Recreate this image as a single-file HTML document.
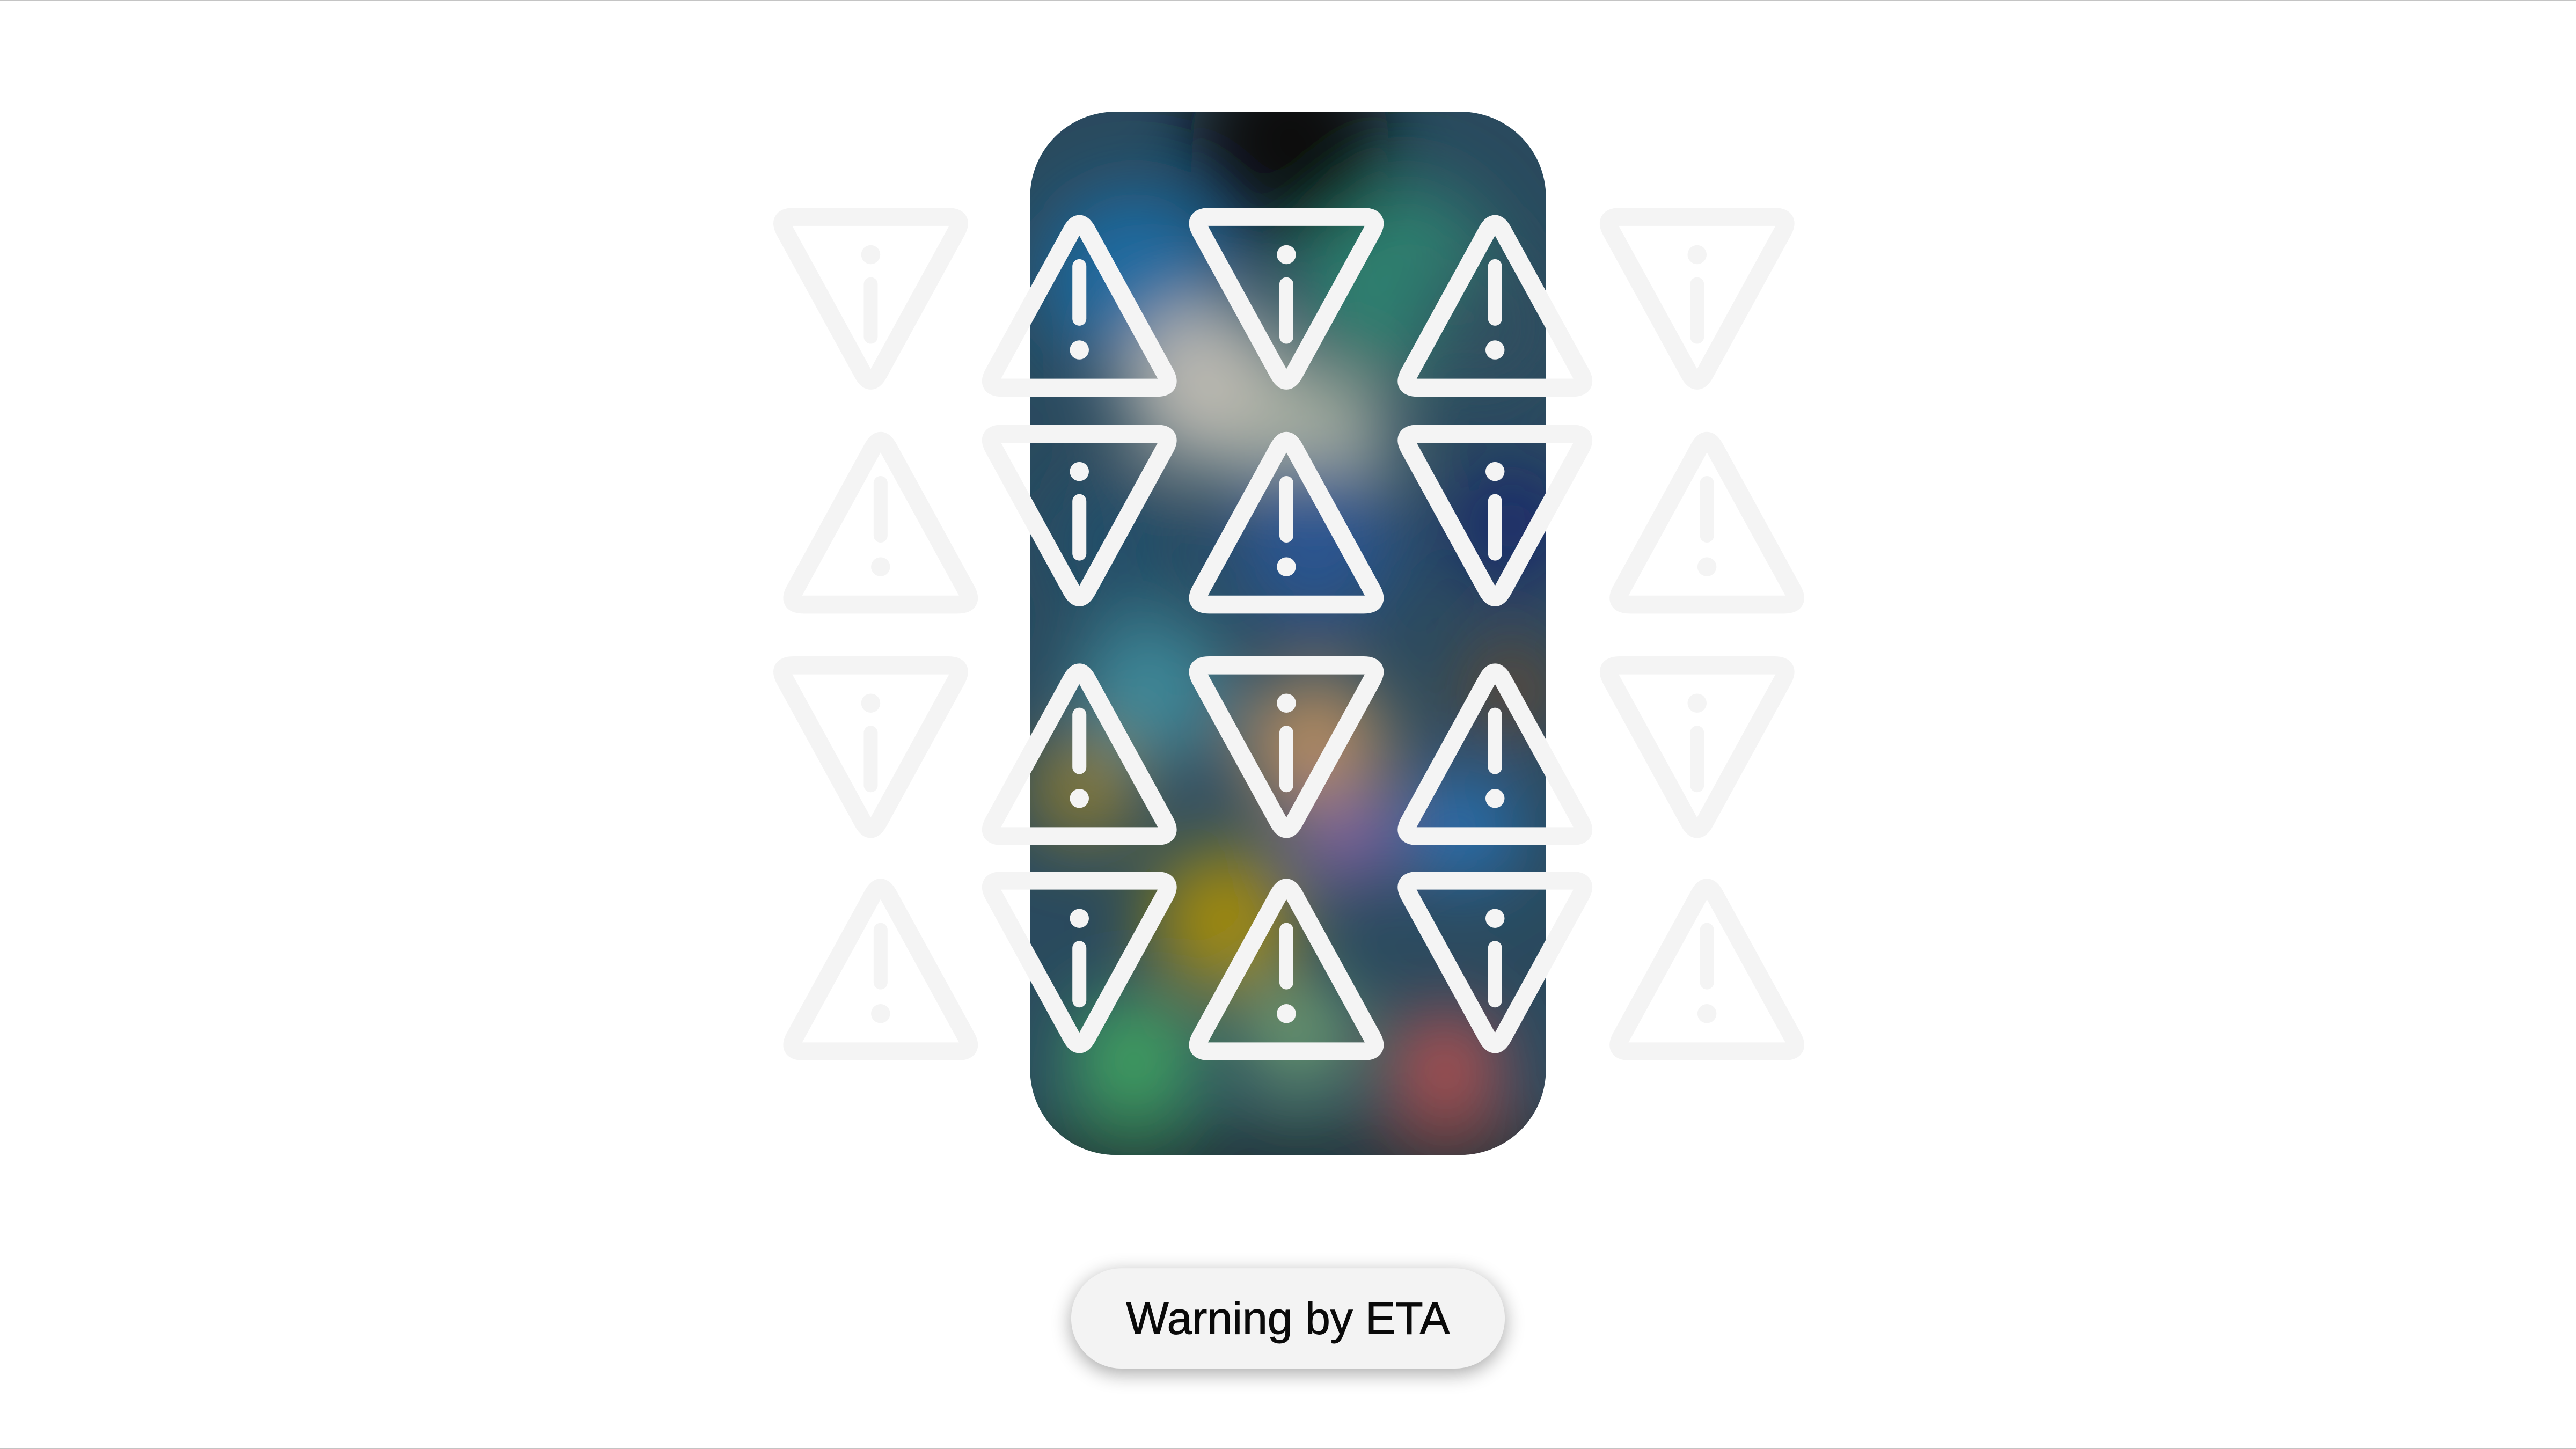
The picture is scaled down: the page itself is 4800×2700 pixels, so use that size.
<!DOCTYPE html>
<html><head><meta charset="utf-8"><style>
html,body{margin:0;padding:0;background:#fff;width:4800px;height:2700px;overflow:hidden}
svg{display:block}
</style></head><body>
<svg width="4800" height="2700" viewBox="0 0 1568 882" xmlns="http://www.w3.org/2000/svg">
<defs>
<clipPath id="ph"><rect x="627" y="68" width="314" height="635" rx="52"/></clipPath>
<filter id="bl" x="-50%" y="-50%" width="200%" height="200%"><feGaussianBlur stdDeviation="22"/></filter>
<filter id="sh" x="-20%" y="-50%" width="140%" height="200%"><feGaussianBlur stdDeviation="6"/></filter>
<g id="up" fill="none" stroke="#f4f4f4" stroke-linejoin="round" stroke-linecap="round">
<path d="M57.19 12.77 Q62 4 66.81 12.77 L114.19 99.23 Q119 108 109 108 L15 108 Q5 108 9.81 99.23 Z" stroke-width="11"/>
<path d="M62 34 L62 66" stroke-width="8.5"/>
<circle cx="62" cy="85" r="5.8" fill="#f4f4f4" stroke="none"/>
</g>
<g id="dn" fill="none" stroke="#f4f4f4" stroke-linejoin="round" stroke-linecap="round">
<path d="M57.19 99.23 Q62 108 66.81 99.23 L114.19 12.77 Q119 4 109 4 L15 4 Q5 4 9.81 12.77 Z" stroke-width="11"/>
<circle cx="62" cy="27" r="5.8" fill="#f4f4f4" stroke="none"/>
<path d="M62 45 L62 77" stroke-width="8.5"/>
</g>
</defs>
<rect width="1568" height="882" fill="#fff"/>
<line x1="0" y1="0.3" x2="1568" y2="0.3" stroke="#c4c4c4" stroke-width="0.6"/>
<line x1="0" y1="881.7" x2="1568" y2="881.7" stroke="#c4c4c4" stroke-width="0.6"/>
<g clip-path="url(#ph)">
<rect x="600" y="40" width="370" height="700" fill="#2a4a5e"/>
<g filter="url(#bl)">
<circle cx="690" cy="170" r="55" fill="#1a6aa0"/>
<circle cx="850" cy="170" r="60" fill="#2e8070"/>
<circle cx="735" cy="235" r="50" fill="#bab8b0"/>
<circle cx="800" cy="270" r="45" fill="#a8b0a0"/>
<circle cx="905" cy="200" r="40" fill="#305060"/>
<circle cx="920" cy="320" r="40" fill="#1d2d6a"/>
<circle cx="800" cy="330" r="50" fill="#2a5590"/>
<circle cx="680" cy="330" r="40" fill="#24506a"/>
<circle cx="700" cy="420" r="45" fill="#3e8898"/>
<circle cx="800" cy="455" r="45" fill="#b08a60"/>
<circle cx="660" cy="480" r="35" fill="#8a7a30"/>
<circle cx="745" cy="560" r="45" fill="#a08a10"/>
<circle cx="820" cy="510" r="30" fill="#8060a0"/>
<circle cx="890" cy="505" r="35" fill="#2a70b0"/>
<circle cx="920" cy="420" r="30" fill="#604838"/>
<circle cx="690" cy="645" r="40" fill="#40a060"/>
<circle cx="790" cy="630" r="35" fill="#6a9a70"/>
<circle cx="880" cy="650" r="35" fill="#b05050"/>
<circle cx="785" cy="85" r="60" fill="#0a0a0e"/>
<rect x="600" y="690" width="370" height="40" fill="#203030"/>
</g>
</g>
<use href="#dn" x="468" y="128"/><use href="#up" x="595" y="128"/><use href="#dn" x="721" y="128"/><use href="#up" x="848" y="128"/><use href="#dn" x="971" y="128"/>
<use href="#up" x="474" y="260"/><use href="#dn" x="595" y="260"/><use href="#up" x="721" y="260"/><use href="#dn" x="848" y="260"/><use href="#up" x="977" y="260"/>
<use href="#dn" x="468" y="401"/><use href="#up" x="595" y="401"/><use href="#dn" x="721" y="401"/><use href="#up" x="848" y="401"/><use href="#dn" x="971" y="401"/>
<use href="#up" x="474" y="532"/><use href="#dn" x="595" y="532"/><use href="#up" x="721" y="532"/><use href="#dn" x="848" y="532"/><use href="#up" x="977" y="532"/>
<rect x="652" y="775" width="264" height="61" rx="30.5" fill="#000" opacity="0.35" filter="url(#sh)"/>
<rect x="652" y="772" width="264" height="61" rx="30.5" fill="#f3f3f3"/>
<text x="784" y="812" text-anchor="middle" font-family="Liberation Sans, sans-serif" font-size="27.5" fill="#0a0a0a" stroke="#0a0a0a" stroke-width="0.3">Warning by ETA</text>
</svg>
</body></html>
